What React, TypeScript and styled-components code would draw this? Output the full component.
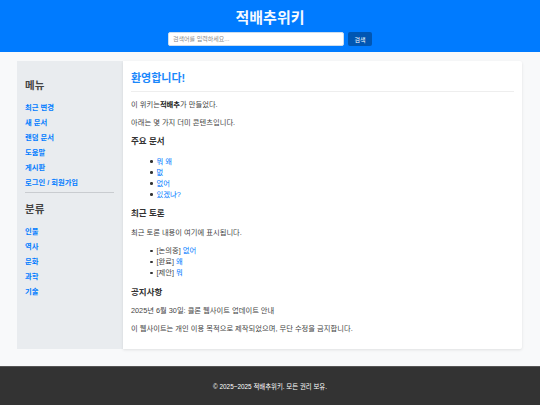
import * as React from 'react';
import styled, { createGlobalStyle } from 'styled-components';

const GlobalStyle = createGlobalStyle`
    html, body {
        margin: 0;
        padding: 0;
        background: #f8f9fa;
    }
    body {
        font-family: "Liberation Sans", "Noto Sans CJK KR", sans-serif;
        color: #333;
        font-size: 8px;
    }
    * {
        box-sizing: border-box;
    }
`

const Page = styled.div`
    width: 540px;
    height: 405px;
    display: flex;
    flex-direction: column;
    overflow: hidden;
`

const Header = styled.header`
    flex: 0 0 52px;
    background: #007bff;
    display: flex;
    flex-direction: column;
    align-items: center;
    padding-top: 8px;
`

const SiteTitle = styled.h1`
    margin: 0 0 5px;
    height: 19px;
    line-height: 19px;
    font-size: 15px;
    font-weight: 700;
    color: #f4f9ff;
`

const SearchForm = styled.form`
    display: flex;
    gap: 4px;
`

const SearchInput = styled.input`
    width: 176px;
    height: 14px;
    padding: 0 4px;
    border: 1px solid #cde;
    border-radius: 2px;
    background: #fff;
    font-family: inherit;
    font-size: 6px;
    outline: none;
    &::placeholder {
        color: #8a8a8a;
    }
`

const SearchButton = styled.button`
    width: 24px;
    height: 14px;
    padding: 0;
    border: none;
    border-radius: 2px;
    background: #0056b3;
    color: #fff;
    font-family: inherit;
    font-size: 6px;
`

const Body = styled.div`
    flex: 1;
    min-height: 0;
    display: flex;
    padding: 9px 18px 17px 17px;
`

const Sidebar = styled.aside`
    width: 106px;
    background: #e9ecef;
    padding: 17px 9px 0 8px;
`

const SideTitle = styled.h2`
    margin: 0 0 8px;
    font-size: 10.5px;
    line-height: 14px;
    font-weight: 700;
    color: #444;
`

const SideList = styled.ul`
    list-style: none;
    margin: 0;
    padding: 0;
`

const SideItem = styled.li`
    height: 15px;
    line-height: 15px;
    font-size: 7.3px;
    font-weight: 700;
`

const Link = styled.a`
    color: #007bff;
    text-decoration: none;
`

const SideRule = styled.hr`
    margin: 2px 0 9px;
    border: none;
    border-top: 1px solid #c9ccd0;
`

const Main = styled.main`
    flex: 1;
    background: #fff;
    border-radius: 0 2px 2px 0;
    box-shadow: 0 1px 3px rgba(0, 0, 0, 0.1);
    padding: 9px 8px 0;
`

const PageTitle = styled.h2`
    margin: 0 0 8px;
    padding-bottom: 5px;
    border-bottom: 1px solid #eee;
    font-size: 11px;
    line-height: 16px;
    font-weight: 700;
    color: #1a87fb;
`

const Text = styled.p`
    margin: 0 0 7.5px;
    font-size: 7.3px;
    line-height: 10px;
    color: #444;
    strong {
        color: #222;
    }
`

const SectionTitle = styled.h3`
    margin: 7.5px 0 8.5px;
    font-size: 8.5px;
    line-height: 12px;
    font-weight: 700;
`

const BulletList = styled.ul`
    list-style: none;
    margin: 0;
    padding-left: 19px;
`

const Bullet = styled.li`
    font-size: 7.3px;
    line-height: 11px;
    color: #444;
    &::before {
        content: "";
        display: inline-block;
        width: 2.5px;
        height: 2.5px;
        margin-right: 4px;
        border-radius: 50%;
        background: #333;
        vertical-align: middle;
    }
`

const Footer = styled.footer`
    flex: 0 0 39px;
    background: #333;
    border-top: 1px solid #555;
    color: #fff;
    font-size: 6.4px;
    display: flex;
    align-items: center;
    justify-content: center;
`

const menuItems = ['최근 변경', '새 문서', '랜덤 문서', '도움말', '게시판', '로그인 / 회원가입'];
const categoryItems = ['인물', '역사', '문화', '과학', '기술'];
const docItems = ['뭐 왜', '멊', '없어', '있겠냐?'];
const talkItems = [
    { status: '[논의중]', title: '없어' },
    { status: '[완료]', title: '왜' },
    { status: '[제안]', title: '뭐' },
];

const App: React.FC = () => {
    return (
        <Page>
            <GlobalStyle />
            <Header>
                <SiteTitle>적배추위키</SiteTitle>
                <SearchForm>
                    <SearchInput placeholder="검색어를 입력하세요..." />
                    <SearchButton type="button">검색</SearchButton>
                </SearchForm>
            </Header>
            <Body>
                <Sidebar>
                    <SideTitle>메뉴</SideTitle>
                    <SideList>
                        {menuItems.map(item => (
                            <SideItem key={item}><Link href="#">{item}</Link></SideItem>
                        ))}
                    </SideList>
                    <SideRule />
                    <SideTitle>분류</SideTitle>
                    <SideList>
                        {categoryItems.map(item => (
                            <SideItem key={item}><Link href="#">{item}</Link></SideItem>
                        ))}
                    </SideList>
                </Sidebar>
                <Main>
                    <PageTitle>환영합니다!</PageTitle>
                    <Text>이 위키는<strong>적배추</strong>가 만들었다.</Text>
                    <Text>아래는 몇 가지 더미 콘텐츠입니다.</Text>
                    <SectionTitle>주요 문서</SectionTitle>
                    <BulletList>
                        {docItems.map(item => (
                            <Bullet key={item}><Link href="#">{item}</Link></Bullet>
                        ))}
                    </BulletList>
                    <SectionTitle>최근 토론</SectionTitle>
                    <Text>최근 토론 내용이 여기에 표시됩니다.</Text>
                    <BulletList>
                        {talkItems.map(item => (
                            <Bullet key={item.status}>{item.status} <Link href="#">{item.title}</Link></Bullet>
                        ))}
                    </BulletList>
                    <SectionTitle>공지사항</SectionTitle>
                    <Text>2025년 6월 30일: 클론 웹사이트 업데이트 안내</Text>
                    <Text>이 웹사이트는 개인 이용 목적으로 제작되었으며, 무단 수정을 금지합니다.</Text>
                </Main>
            </Body>
            <Footer>© 2025~2025 적배추위키. 모든 권리 보유.</Footer>
        </Page>
    );
};

export default App;
